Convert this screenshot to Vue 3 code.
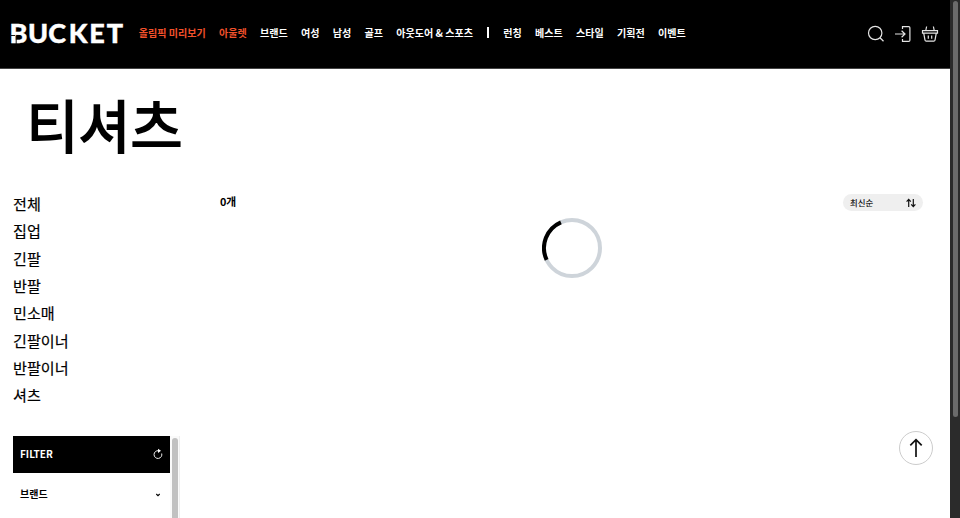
<script setup>
const hot = ['올림픽 미리보기', '아울렛']
const menu = ['브랜드', '여성', '남성', '골프', '아웃도어 & 스포츠']
const more = ['런칭', '베스트', '스타일', '기획전', '이벤트']
const categories = ['전체', '집업', '긴팔', '반팔', '민소매', '긴팔이너', '반팔이너', '셔츠']
</script>

<template>
  <div class="window">
    <div class="page">
      <header class="header">
        <a class="logo" aria-label="BUCKET">
          <svg width="120" height="36" viewBox="0 0 120 36">
            <text x="-0.5 18 38.300 58.800 79.200 96.800" y="26.800">BUCKET</text>
            <path d="M1 19.500h4.200M6.200 20v8" fill="none" stroke="#000" stroke-width=".9" />
          </svg>
        </a>
        <nav class="nav">
          <a v-for="item in hot" :key="item" class="hot">{{ item }}</a>
          <a v-for="item in menu" :key="item">{{ item }}</a>
          <span class="divider"></span>
          <a v-for="item in more" :key="item">{{ item }}</a>
        </nav>
        <div class="actions">
          <svg width="18" height="18" viewBox="0 0 18 18">
            <circle cx="8.200" cy="8" r="6.700" />
            <path d="M13 12.800l3.500 3.400" />
          </svg>
          <svg width="18" height="18" viewBox="0 0 18 18">
            <path d="M1 9h10M7.600 5.700L11 9l-3.400 3.300M8.500 4V1.600h6.200q1.200 0 1.200 1.200v12.400q0 1.200-1.200 1.200H8.500V14" />
          </svg>
          <svg width="18" height="18" viewBox="0 0 18 18">
            <path d="M1.500 5.700h15v2.500h-15zM2.800 8.700l1.200 6.500q.2 1 1.200 1h7.600q1 0 1.200-1l1.200-6.500M5.600 1.500L4.800 5.500M12.400 1.500l.8 4M7.300 10.500v3.200M10.700 10.500v3.200" />
          </svg>
        </div>
      </header>

      <h1 class="title">티셔츠</h1>

      <main class="content">
        <aside class="sidebar">
          <ul class="categories">
            <li v-for="name in categories" :key="name">{{ name }}</li>
          </ul>
          <div class="filter">
            <div class="filter-body">
              <div class="filter-head">
                <span>FILTER</span>
                <svg width="12" height="12" viewBox="0 0 12 12">
                  <path d="M6.500 2.700A3.900 3.900 0 1 0 9.700 5.500" fill="none" stroke="#eee" stroke-width="1" />
                  <path d="M6 .7L9 2.800 6 4.900z" fill="#fff" />
                </svg>
              </div>
              <div class="filter-row">
                <span>브랜드</span>
                <svg width="6" height="6" viewBox="0 0 6 6">
                  <path d="M1.300 2l1.700 1.700L4.700 2" fill="none" stroke="#000" stroke-width="1.100" />
                </svg>
              </div>
            </div>
            <div class="filter-track"><div class="filter-thumb"></div></div>
          </div>
        </aside>

        <section class="results">
          <div class="toolbar">
            <span class="count">0개</span>
            <button class="sort">
              <span>최신순</span>
              <svg width="10" height="10" viewBox="0 0 10 10">
                <path d="M2.700 9V1.500M.6 3.600l2.100-2.200 2.100 2.200M7.300 1v7.500M5.200 6.400l2.100 2.200 2.100-2.200" fill="none" stroke="#111" stroke-width="1.200" />
              </svg>
            </button>
          </div>
          <svg class="spinner" width="60" height="60" viewBox="0 0 60 60">
            <circle cx="30" cy="30" r="28" fill="none" stroke="#ced4da" stroke-width="4" />
            <path d="M4.600 41.800A28 28 0 0 1 18.900 4.300" fill="none" stroke="#000" stroke-width="4" />
          </svg>
        </section>
      </main>

      <button class="top">
        <svg width="14" height="20" viewBox="0 0 14 20">
          <path d="M7 19V2M1.300 7.300L7 1.600l5.700 5.700" fill="none" stroke="#111" stroke-width="1.700" />
        </svg>
      </button>
    </div>
    <div class="track"><div class="thumb"></div></div>
  </div>
</template>

<style>
body { margin: 0; overflow: hidden; }
</style>

<style scoped>
.window {
  display: flex;
  width: 960px;
  height: 518px;
  overflow: hidden;
  background: #fff;
  color: #000;
  font-family: "Noto Sans CJK KR", sans-serif;
}
.page { position: relative; width: 950px; height: 518px; overflow: hidden; }
.track { box-sizing: border-box; width: 10px; padding: 1px 2px 0 3px; background: #2b2b2b; }
.thumb { width: 5px; height: 416px; border-radius: 3px; background: #6b6b6b; }
.header {
  box-sizing: border-box;
  display: flex;
  align-items: center;
  height: 69px;
  padding: 0 12px 2px 10px;
  background: #000;
  border-bottom: 1px solid #444;
}
.logo { width: 120px; height: 36px; padding-top: 2px; }
.logo svg { display: block; overflow: visible; }
.logo text { fill: #fff; stroke: #fff; stroke-width: .4px; font: 900 27px Lato, sans-serif; }
.nav {
  display: flex;
  align-items: center;
  gap: 13.250px;
  margin-left: 8.800px;
  color: #fff;
  font-size: 10.060px;
  font-weight: 700;
  line-height: 16px;
  white-space: nowrap;
}
.hot { color: #f2512b; }
.divider { width: 1.500px; height: 11px; margin: 0 1.200px .5px; background: #fff; }
.actions { display: flex; gap: 9px; margin-left: auto; padding-top: 2px; margin-right: -.5px; }
.actions svg { fill: none; stroke: #e4e4e4; stroke-width: 1.200; }
.title {
  margin: 12px 0 0 26.500px;
  font-size: 56.500px;
  font-weight: 400;
  line-height: 84px;
  -webkit-text-stroke: 1.800px #000;
}
.content { display: flex; padding: 27px 27px 0 13px; }
.sidebar { width: 167px; }
.categories {
  margin: -2px 0 0;
  padding: 0;
  list-style: none;
  font-size: 15.100px;
  line-height: 27.350px;
  -webkit-text-stroke: .2px #000;
}
.filter { display: flex; height: 100px; margin-top: 27.200px; }
.filter-body { width: 157px; }
.filter-head, .filter-row {
  box-sizing: border-box;
  display: flex;
  align-items: center;
  justify-content: space-between;
  font-size: 10px;
  font-weight: 700;
}
.filter-head { height: 37px; padding: 0 6px 2px 7px; background: #000; color: #fff; }
.filter-head svg { margin-top: 2px; }
.filter-row { height: 43px; padding: 0 9px 1px 7px; }
.filter-row svg { margin-top: 2px; }
.filter-track { box-sizing: border-box; width: 10px; padding: 2px 2px 0; background: #fafafa; border-right: 1px solid #eee; }
.filter-thumb { width: 6px; height: 98px; border-radius: 3px; background: #c1c1c1; }
.results { flex: 1; margin-left: 40px; }
.toolbar { display: flex; justify-content: space-between; height: 26px; padding-top: 2px; box-sizing: border-box; }
.count { font-size: 10.800px; font-weight: 700; line-height: 15px; }
.sort {
  box-sizing: border-box;
  display: flex;
  align-items: center;
  justify-content: space-between;
  width: 80px;
  height: 17px;
  padding: 0 7px 1px;
  border: 0;
  border-radius: 9px;
  background: #efefef;
  color: #000;
  font: 400 8.400px "Noto Sans CJK KR", sans-serif;
}
.sort span { margin-top: -1px; -webkit-text-stroke: .1px #000; }
.sort svg { margin-top: 1px; }
.spinner { display: block; margin: 0 auto; }
.top {
  position: absolute;
  right: 17px;
  bottom: 53px;
  box-sizing: border-box;
  display: flex;
  align-items: center;
  justify-content: center;
  width: 34px;
  height: 34px;
  padding: 0;
  border: 1px solid #ccc;
  border-radius: 50%;
  background: #fff;
}
</style>
